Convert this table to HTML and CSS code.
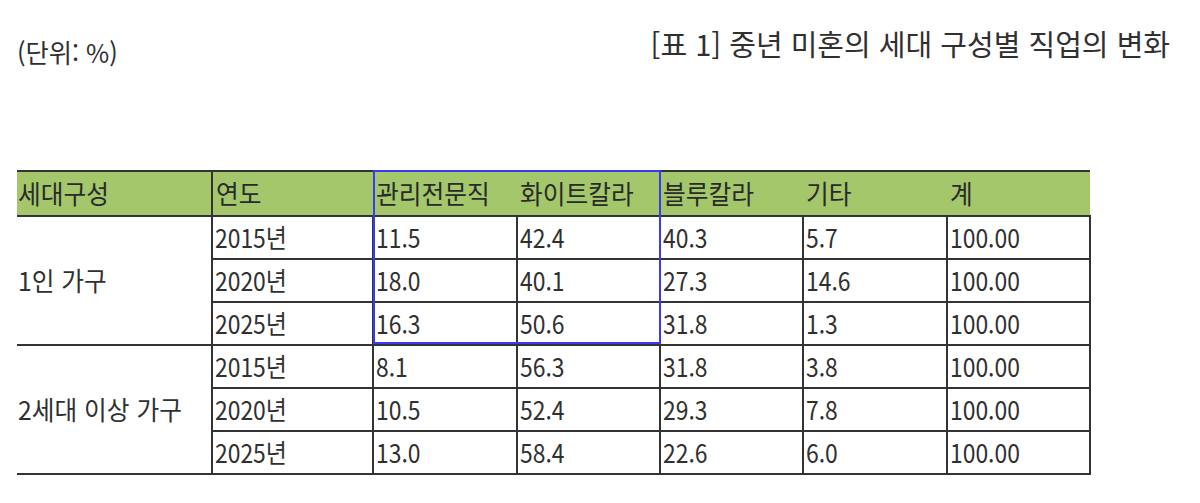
FILE: index.html
```html
<!DOCTYPE html>
<html lang="ko">
<head>
<meta charset="utf-8">
<link rel="stylesheet" href="styles.css">
</head>
<body>
<div class="page">
  <div class="top">
    <div class="unit"><span class="t">(단위: %)</span></div>
    <div class="title">[표 1] 중년 미혼의 세대 구성별 직업의 변화</div>
  </div>
  <div class="table-wrap">
    <table class="data">
      <colgroup>
        <col class="c1"><col class="c2"><col class="c3"><col class="c4"><col class="c5"><col class="c6"><col class="c7">
      </colgroup>
      <thead>
        <tr>
          <th class="first"><span class="t h">세대구성</span></th>
          <th class="year"><span class="t h">연도</span></th>
          <th><span class="t h">관리전문직</span></th>
          <th><span class="t h">화이트칼라</span></th>
          <th><span class="t h">블루칼라</span></th>
          <th><span class="t h">기타</span></th>
          <th><span class="t h">계</span></th>
        </tr>
      </thead>
      <tbody>
        <tr>
          <td class="first group" rowspan="3"><span class="t h">1인 가구</span></td>
          <td><span class="t">2015년</span></td><td><span class="t">11.5</span></td><td><span class="t">42.4</span></td><td><span class="t">40.3</span></td><td><span class="t">5.7</span></td><td><span class="t">100.00</span></td>
        </tr>
        <tr>
          <td><span class="t">2020년</span></td><td><span class="t">18.0</span></td><td><span class="t">40.1</span></td><td><span class="t">27.3</span></td><td><span class="t">14.6</span></td><td><span class="t">100.00</span></td>
        </tr>
        <tr>
          <td><span class="t">2025년</span></td><td><span class="t">16.3</span></td><td><span class="t">50.6</span></td><td><span class="t">31.8</span></td><td><span class="t">1.3</span></td><td><span class="t">100.00</span></td>
        </tr>
        <tr>
          <td class="first group" rowspan="3"><span class="t h">2세대 이상 가구</span></td>
          <td><span class="t">2015년</span></td><td><span class="t">8.1</span></td><td><span class="t">56.3</span></td><td><span class="t">31.8</span></td><td><span class="t">3.8</span></td><td><span class="t">100.00</span></td>
        </tr>
        <tr>
          <td><span class="t">2020년</span></td><td><span class="t">10.5</span></td><td><span class="t">52.4</span></td><td><span class="t">29.3</span></td><td><span class="t">7.8</span></td><td><span class="t">100.00</span></td>
        </tr>
        <tr>
          <td><span class="t">2025년</span></td><td><span class="t">13.0</span></td><td><span class="t">58.4</span></td><td><span class="t">22.6</span></td><td><span class="t">6.0</span></td><td><span class="t">100.00</span></td>
        </tr>
      </tbody>
    </table>
    <div class="selection"></div>
  </div>
</div>
</body>
</html>
```

FILE: styles.css
```css
html, body {
  margin: 0;
  padding: 0;
  background: #ffffff;
}

body {
  font-family: "Noto Sans CJK KR", "Noto Sans", sans-serif;
  color: #303030;
}

.page {
  width: 1200px;
  height: 503px;
  overflow: hidden;
}

.t {
  display: inline-block;
  white-space: nowrap;
  transform: scaleX(0.88);
  transform-origin: left center;
}

.t.h {
  transform: scaleX(0.95);
}

.top {
  display: flex;
  justify-content: space-between;
  align-items: flex-start;
  padding: 0 30px 0 17px;
  height: 170px;
}

.unit {
  font-size: 26px;
  line-height: 36px;
  margin-top: 34px;
}

.unit .t {
  transform: scaleX(0.97);
}

.title {
  font-size: 29px;
  line-height: 40px;
  margin-top: 23px;
  white-space: nowrap;
}

.table-wrap {
  position: relative;
  margin-left: 17px;
  width: 1073px;
}

.data {
  border-collapse: collapse;
  table-layout: fixed;
  width: 1073px;
  font-size: 26px;
  line-height: 30px;
}

.c1 { width: 195px; }
.c2 { width: 161px; }
.c3 { width: 144px; }
.c4 { width: 143px; }
.c5 { width: 143px; }
.c6 { width: 144px; }
.c7 { width: 143px; }

.data th {
  background: #a3c76a;
  font-weight: 400;
  text-align: left;
  height: 41px;
  padding: 0 0 2px 3px;
  border-top: 2px solid #333;
  border-bottom: 2px solid #333;
  color: #2a2a2a;
  overflow: hidden;
}

.data th.first {
  border-right: 2px solid #333;
  padding-left: 1px;
}

.data td {
  height: 39px;
  padding: 0 0 2px 2px;
  text-align: left;
  border: 2px solid #333;
  overflow: hidden;
}

.data td.first {
  border-left: none;
  padding-left: 1px;
}

.selection {
  position: absolute;
  left: 356px;
  top: 0;
  width: 288px;
  height: 174px;
  border: 2px solid #3a3af4;
  box-sizing: border-box;
  pointer-events: none;
}
```
